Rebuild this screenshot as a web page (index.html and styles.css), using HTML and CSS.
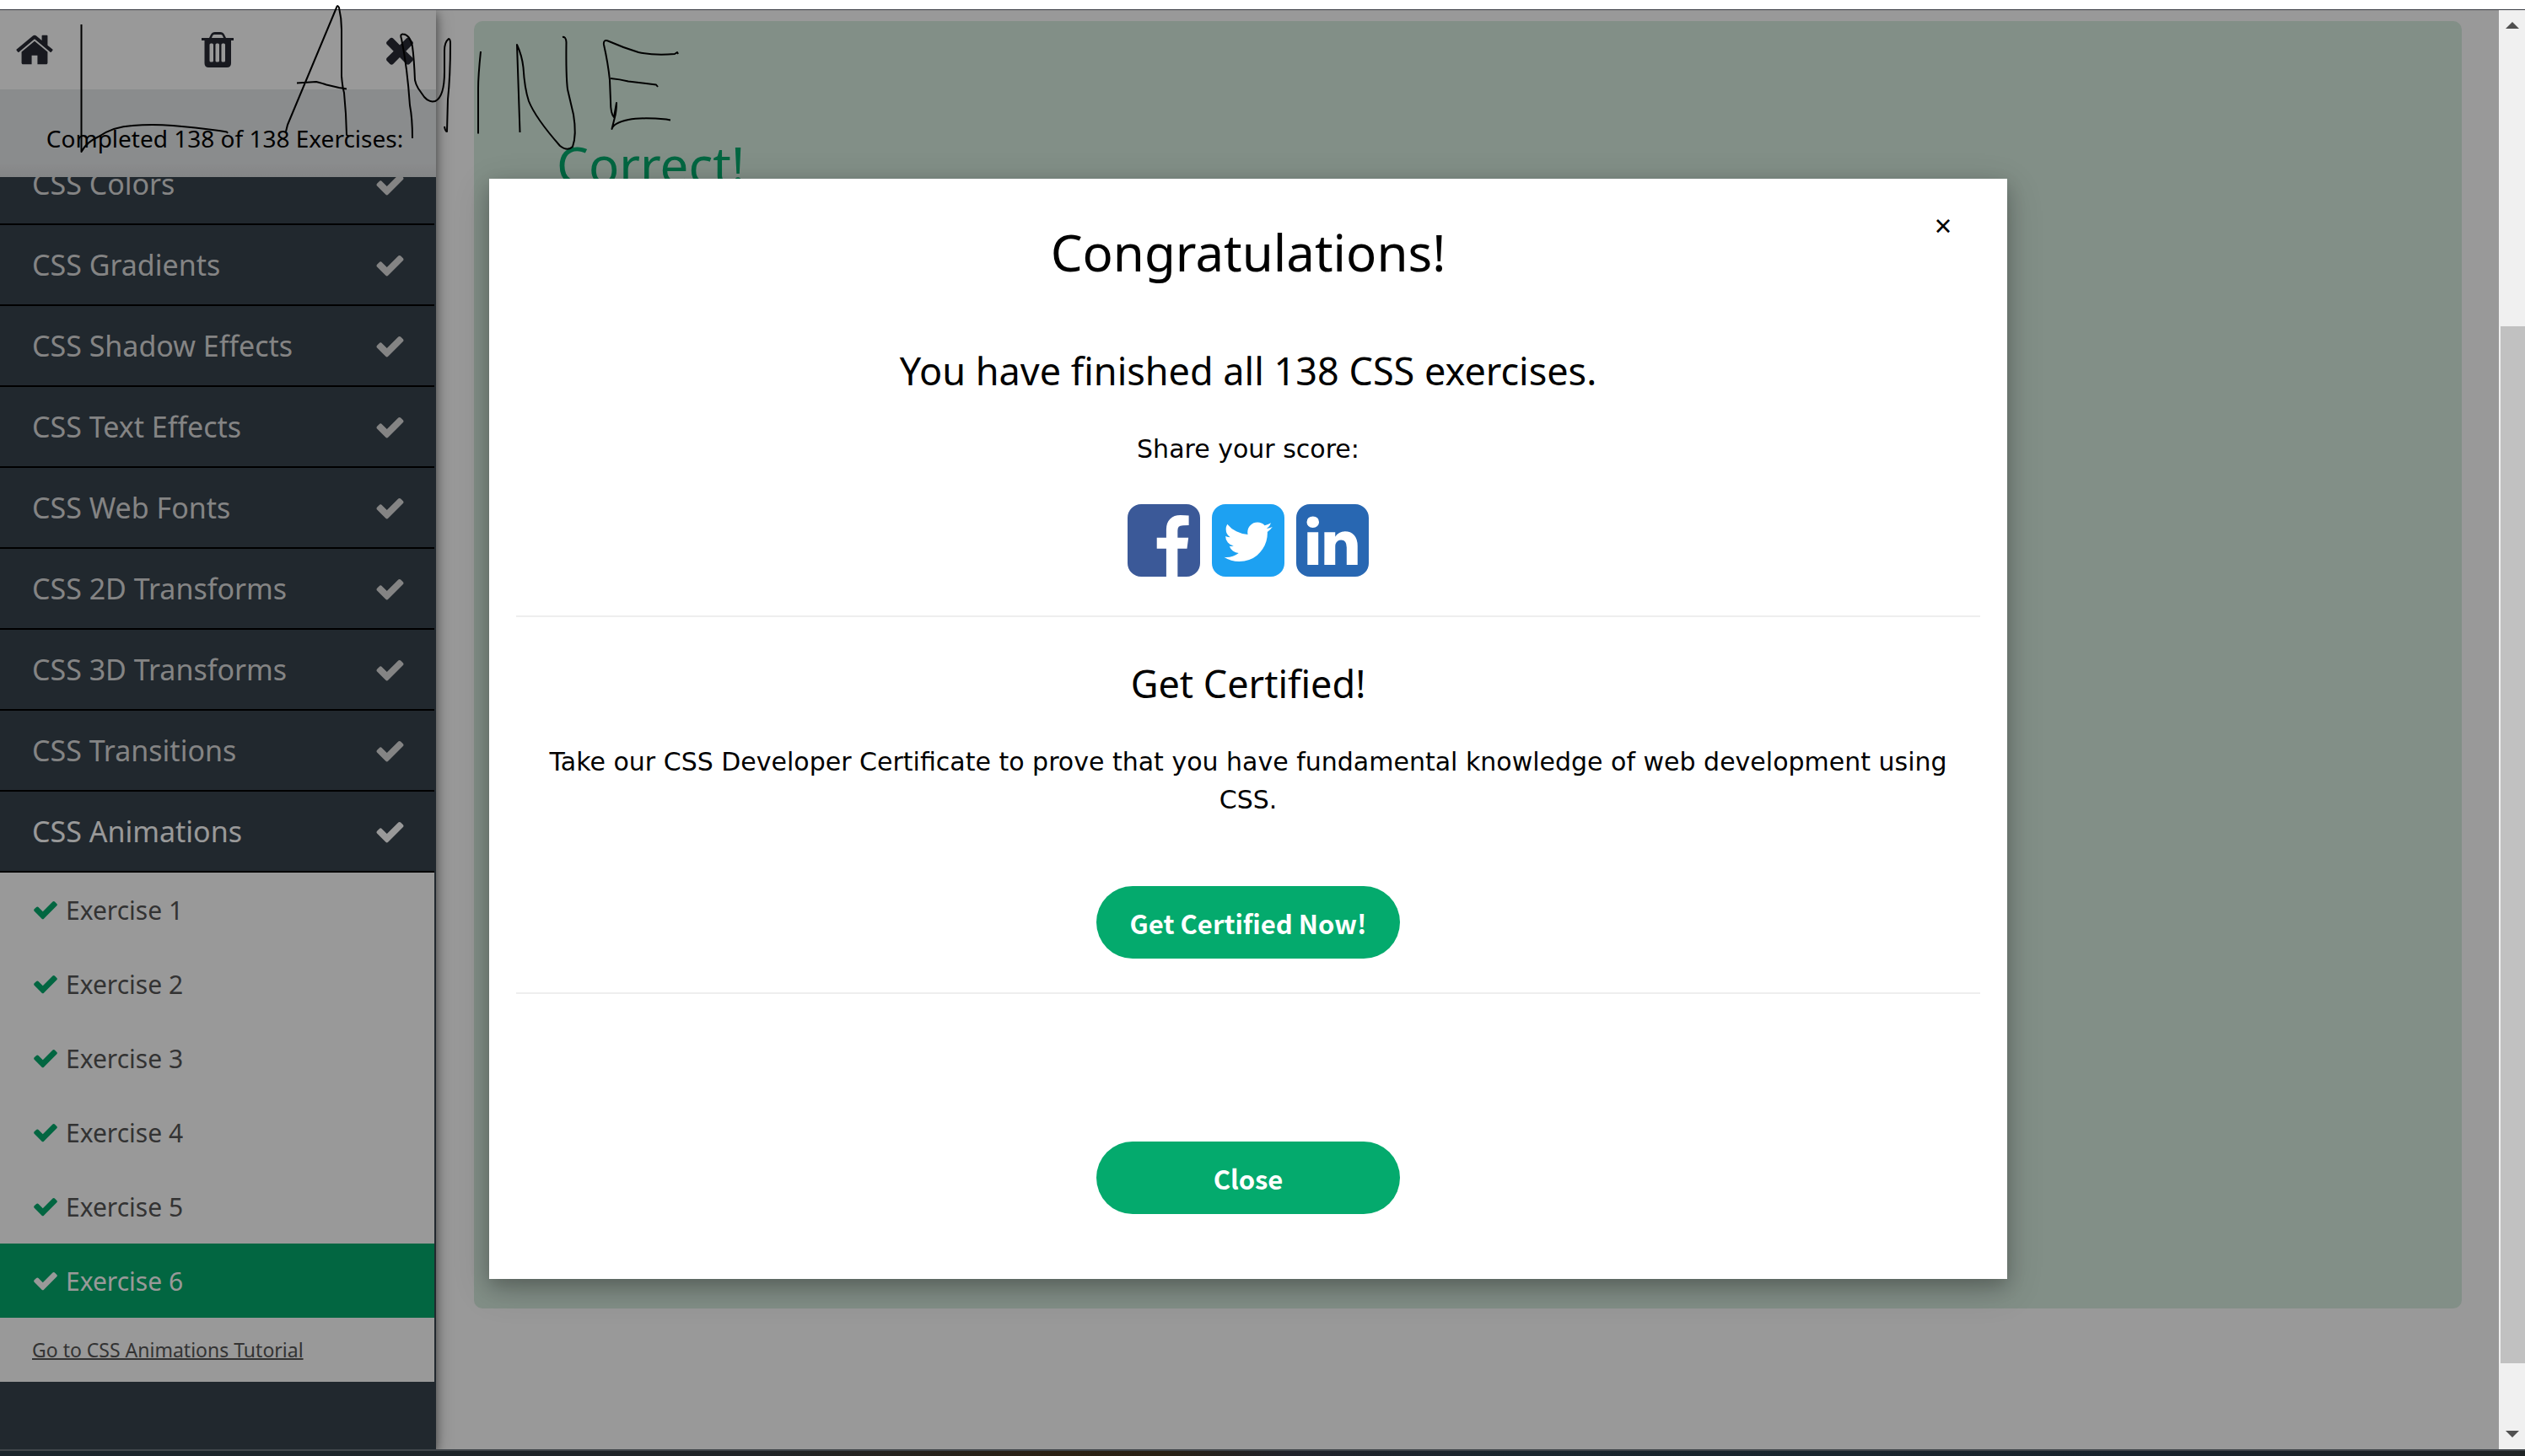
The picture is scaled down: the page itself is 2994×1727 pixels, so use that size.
FILE: index.html
```html
<!DOCTYPE html>
<html lang="en">
<head>
<meta charset="utf-8">
<title>CSS Exercises</title>
<link rel="stylesheet" href="styles.css">
</head>
<body>
<svg class="defs" aria-hidden="true">
  <symbol id="check" viewBox="0 0 1792 1792"><path d="M1671 566q0 40-28 68l-724 724-136 136q-28 28-68 28t-68-28l-136-136-362-362q-28-28-28-68t28-68l136-136q28-28 68-28t68 28l294 295 656-657q28-28 68-28t68 28l136 136q28 28 28 68z"/></symbol>
</svg>
<div class="browser-edge"></div>
<div class="window">
  <div class="page">
    <nav class="sidebar">
      <div class="tools">
        <a class="tool" href="#" aria-label="Home"><svg class="icon-lg" viewBox="0 0 1792 1792"><path d="M1472 992v480q0 26-19 45t-45 19h-384v-384h-256v384h-384q-26 0-45-19t-19-45v-480q0-1 .5-3t.5-3l575-474 575 474q1 2 1 6zm223-69l-62 74q-8 9-21 11h-3q-13 0-21-7l-692-577-692 577q-12 8-24 7-13-2-21-11l-62-74q-8-10-7-23.5t11-21.5l719-599q32-26 76-26t76 26l244 204v-195q0-14 9-23t23-9h192q14 0 23 9t9 23v408l219 182q10 8 11 21.5t-7 23.5z"/></svg></a>
        <button class="tool" type="button" aria-label="Reset score"><svg class="icon-trash" viewBox="0 0 38 42"><path fill-rule="evenodd" d="M0 7h9l2-4q1.500-3 5-3h6q3.500 0 5 3l2 4h9v3h-3v27q0 5-5 5H8.500q-5 0-5-5V10H0zM12 7h14l-1-2.500q-.5-1.500-2-1.500h-8q-1.500 0-2 1.500zM11 13.500q-1.500 0-1.500 1.500v19q0 1.500 1.500 1.500h1.500q1.500 0 1.500-1.500V15q0-1.500-1.500-1.500zM18 13.500q-1.500 0-1.500 1.500v19q0 1.500 1.500 1.500h1.500q1.500 0 1.500-1.500V15q0-1.500-1.500-1.500zM25 13.500q-1.500 0-1.500 1.500v19q0 1.500 1.500 1.500h1.500q1.500 0 1.500-1.500V15q0-1.500-1.500-1.500z"/></svg></button>
        <button class="tool" type="button" aria-label="Close menu"><svg class="icon-lg" viewBox="0 0 1792 1792"><path d="M1490 1322q0 40-28 68l-136 136q-28 28-68 28t-68-28l-294-294-294 294q-28 28-68 28t-68-28l-136-136q-28-28-28-68t28-68l294-294-294-294q-28-28-28-68t28-68l136-136q28-28 68-28t68 28l294 294 294-294q28-28 68-28t68 28l136 136q28 28 28 68t-28 68l-294 294 294 294q28 28 28 68z"/></svg></button>
      </div>
      <p class="progress">Completed 138 of 138 Exercises:</p>
      <div class="menu">
        <ul class="topics">
          <li><a class="topic" href="#">CSS Colors<svg class="tick"><use href="#check"/></svg></a></li>
          <li><a class="topic" href="#">CSS Gradients<svg class="tick"><use href="#check"/></svg></a></li>
          <li><a class="topic" href="#">CSS Shadow Effects<svg class="tick"><use href="#check"/></svg></a></li>
          <li><a class="topic" href="#">CSS Text Effects<svg class="tick"><use href="#check"/></svg></a></li>
          <li><a class="topic" href="#">CSS Web Fonts<svg class="tick"><use href="#check"/></svg></a></li>
          <li><a class="topic" href="#">CSS 2D Transforms<svg class="tick"><use href="#check"/></svg></a></li>
          <li><a class="topic" href="#">CSS 3D Transforms<svg class="tick"><use href="#check"/></svg></a></li>
          <li><a class="topic" href="#">CSS Transitions<svg class="tick"><use href="#check"/></svg></a></li>
          <li><a class="topic open" href="#">CSS Animations<svg class="tick"><use href="#check"/></svg></a>
            <ul class="exercises">
              <li><a class="exercise" href="#"><svg class="done"><use href="#check"/></svg>Exercise 1</a></li>
              <li><a class="exercise" href="#"><svg class="done"><use href="#check"/></svg>Exercise 2</a></li>
              <li><a class="exercise" href="#"><svg class="done"><use href="#check"/></svg>Exercise 3</a></li>
              <li><a class="exercise" href="#"><svg class="done"><use href="#check"/></svg>Exercise 4</a></li>
              <li><a class="exercise" href="#"><svg class="done"><use href="#check"/></svg>Exercise 5</a></li>
              <li><a class="exercise current" href="#"><svg class="done"><use href="#check"/></svg>Exercise 6</a></li>
              <li class="tutorial"><a href="#">Go to CSS Animations Tutorial</a></li>
            </ul>
          </li>
        </ul>
      </div>
    </nav>
    <main class="content">
      <section class="result"><h1 class="title">Correct!</h1></section>
    </main>
    <div class="overlay">
      <div class="modal" role="dialog" aria-labelledby="congrats">
        <button class="dismiss" type="button" aria-label="Dismiss">×</button>
        <h1 class="title" id="congrats">Congratulations!</h1>
        <h2 class="subtitle">You have finished all 138 CSS exercises.</h2>
        <p class="text">Share your score:</p>
        <div class="share">
          <a href="#" aria-label="Facebook"><svg class="social facebook" viewBox="128 128 1536 1536"><path d="M1376 128q119 0 203.5 84.500t84.500 203.500v960q0 119-84.500 203.500t-203.500 84.500h-188v-595h199l30-232h-229v-148q0-56 23.500-84t91.500-28l122-1v-207q-63-9-178-9-136 0-217.500 80t-81.500 226v171h-200v232h200v595h-532q-119 0-203.500-84.500t-84.500-203.500v-960q0-119 84.500-203.500t203.500-84.500h960z"/></svg></a>
          <a href="#" aria-label="Twitter"><svg class="social twitter" viewBox="128 128 1536 1536"><path d="M1408 610q-56 25-121 34 68-40 93-117-65 38-134 51-61-66-153-66-87 0-148.500 61.500t-61.500 148.500q0 29 5 48-129-7-242-65t-192-155q-29 50-29 106 0 114 91 175-47-1-100-26v1q0 75 50 133.500t123 72.500q-29 8-51 8-13 0-39-4 21 63 74.500 104t121.500 42q-116 90-261 90-26 0-50-3 148 94 322 94 112 0 210-35.500t168-95 120.500-137 75-162 24.500-168.500q0-18-1-27 63-45 105-109zm256-194v960q0 119-84.500 203.500t-203.500 84.500h-960q-119 0-203.500-84.500t-84.500-203.500v-960q0-119 84.500-203.500t203.500-84.500h960q119 0 203.500 84.500t84.500 203.500z"/></svg></a>
          <a href="#" aria-label="LinkedIn"><svg class="social linkedin" viewBox="128 128 1536 1536"><path d="M365 1414h231v-694h-231v694zm246-908q-1-52-36-86t-93-34-94.500 34-36.500 86q0 51 35.500 85.500t92.500 34.500h1q59 0 95-34.500t36-85.500zm585 908h231v-398q0-154-73-233t-193-79q-136 0-209 117h2v-101h-231q3 66 0 694h231v-388q0-38 7-56 15-35 45-59.500t74-24.500q116 0 116 157v371zm468-998v960q0 119-84.500 203.500t-203.500 84.500h-960q-119 0-203.500-84.500t-84.500-203.500v-960q0-119 84.500-203.500t203.500-84.500h960q119 0 203.500 84.500t84.500 203.500z"/></svg></a>
        </div>
        <hr class="rule">
        <h2 class="subtitle">Get Certified!</h2>
        <p class="text">Take our CSS Developer Certificate to prove that you have fundamental knowledge of web development using CSS.</p>
        <button class="pill certify" type="button">Get Certified Now!</button>
        <hr class="rule">
        <button class="pill close" type="button">Close</button>
      </div>
    </div>
  </div>
  <div class="scrollbar">
    <svg class="arrow" viewBox="0 0 16 8"><path d="M8 0l8 8H0z"/></svg>
    <div class="track"><div class="thumb"></div></div>
    <svg class="arrow" viewBox="0 0 16 8"><path d="M0 0h16L8 8z"/></svg>
  </div>
</div>
<div class="taskbar"></div>
<svg class="ink" viewBox="0 0 900 220" aria-hidden="true">
  <path d="M96.500 29V180Q103 168 117 162Q135 150 157 149Q180 147 205 149Q240 152 269 156.500L270 158"/>
  <path d="M339 156L341 148L399 9Q400 5 402 9Q405 22 405 35V90Q406 103 408 110L410 135L411 160L414 162M352 98.500L375 97Q383 99 387 100.500L402 104L411 105.500"/>
  <path d="M489 164Q489 140 486 125Q483 80 476 46Q474 40 478 40.500Q486 41 489 55Q491 70 492 95Q493 100 496 105L503 115Q509 122 516 120Q527 115 527 85V60Q527 50 532 46Q534 46 534 52Q534 90 531 118L530 156Q528 156 527 150"/>
  <path d="M570 61Q567 90 567 105V158.500"/>
  <path d="M616.500 157L613 53Q619 66 620.500 80Q622 105 627 120Q635 140 664 173Q673 180 679 174Q684 160 680 136L673 106Q671 90 671.500 50Q671 43 667 44"/>
  <path d="M804 64L803 62L800 64Q775 66 757 62Q740 57 722 49Q715 46 716 53Q721 75 723 95L724 120Q724 135 728 139L731 122Q731 132 729 139L725.500 153Q727 146 745 142Q760 139 790 141.500L795 142.500M724 93Q735 94 745 96.500L778 100.500L780 103"/>
</svg>
</body>
</html>
```
FILE: styles.css
```css
* { box-sizing: border-box; }
body {
  margin: 0;
  height: 100vh;
  display: flex;
  flex-direction: column;
  position: relative;
  overflow: hidden;
  font-family: "Noto Sans", "Segoe UI", sans-serif;
  color: #000;
  background: #fff;
}
h1, h2, p, ul { margin: 0; padding: 0; font-weight: 400; }
ul { list-style: none; }
a { color: inherit; text-decoration: none; }
button { border: 0; padding: 0; background: none; color: inherit; font-family: inherit; cursor: pointer; }
svg { display: block; fill: currentColor; }
.defs { display: none; }

.browser-edge { flex: none; height: 12px; border-bottom: 1px solid #373a42; }
.window { flex: 1; min-height: 0; display: flex; }
.page { flex: 1; min-width: 0; display: flex; position: relative; overflow: hidden; }
.taskbar {
  flex: none;
  height: 8px;
  border-top: 2px solid #40454a;
  background: linear-gradient(90deg, #1a242b, #202427 30%, #2b2013 42%, #2a2114 46%, #20222a 51%, #1a262e 60%, #18232c 85%, #1e2324);
}

.sidebar {
  width: 517px;
  flex: none;
  display: flex;
  flex-direction: column;
  background: #38434d;
  box-shadow: 0 4px 10px rgba(0, 0, 0, .4), 0 4px 20px rgba(0, 0, 0, .3);
  z-index: 1;
}
.tools {
  flex: none;
  height: 94px;
  display: flex;
  align-items: center;
  justify-content: space-between;
  padding: 0 19px 0 17px;
  background: #fff;
  color: #282a35;
}
.icon-lg { width: 48px; height: 48px; }
.icon-trash { width: 38px; height: 42px; }
.progress {
  flex: none;
  height: 104px;
  padding: 38px 0 0 16px;
  font-size: 28px;
  line-height: 40px;
  text-align: center;
  background: linear-gradient(#e7e9eb 84%, #dcdee0);
}
.menu { flex: 1; min-height: 0; overflow: hidden; padding-right: 2px; }
.topics { margin-top: -39px; }
.topic {
  display: flex;
  align-items: center;
  justify-content: space-between;
  height: 96px;
  padding: 0 34px 0 38px;
  border-bottom: 2px solid #000;
  font-size: 34px;
  color: #ddd;
}
.topic.open { color: #fff; }
.tick { width: 37px; height: 37px; }
.exercises { background: #fff; }
.exercise {
  display: flex;
  align-items: center;
  gap: 8px;
  height: 88px;
  padding-left: 38px;
  font-size: 30px;
  color: #555;
}
.done { width: 32px; height: 32px; color: #04aa6d; }
.current { background: #04aa6d; color: #fff; }
.current .done { color: inherit; }
.tutorial { padding-left: 38px; font-size: 23px; line-height: 76px; color: #555; }
.tutorial a { text-decoration: underline; text-decoration-thickness: 2px; }

.content { flex: 1; display: flex; padding: 13px 44px 167px 45px; background: #fff; }
.result {
  flex: 1;
  padding: 125px 98px 0;
  border-radius: 10px;
  background: #d9eee1;
  color: #04aa6d;
}
.title { font-size: 60px; line-height: 90px; }

.overlay {
  position: absolute;
  inset: 0;
  z-index: 2;
  display: flex;
  align-items: flex-start;
  justify-content: center;
  padding: 200px 3px 0 0;
  background: rgba(0, 0, 0, .4);
}
.modal {
  position: relative;
  width: 1800px;
  max-width: 92%;
  padding: 42px 32px 77px;
  background: #fff;
  text-align: center;
  box-shadow: 0 8px 20px rgba(0, 0, 0, .2), 0 12px 40px rgba(0, 0, 0, .19);
}
.dismiss {
  position: absolute;
  top: 32px;
  right: 60px;
  width: 32px;
  font-size: 36px;
  line-height: 48px;
}
.subtitle { margin: 62px 0 36px; font-size: 45px; line-height: 68px; }
.text { padding: 0 32px; font: 30px/45px "DejaVu Sans", Verdana, sans-serif; }
.share { display: flex; justify-content: center; gap: 14px; margin-top: 43px; }
.social { width: 86px; height: 86px; }
.facebook { color: #3b5998; }
.twitter { color: #1da1f2; }
.linkedin { color: #2867b2; }
.rule { height: 2px; margin: 46px 0 0; border: 0; background: #eee; }
.rule + .subtitle { margin-top: 45px; }
.pill {
  display: block;
  width: 360px;
  height: 86px;
  margin: 80px auto 0;
  border-radius: 43px;
  background: #04aa6d;
  color: #fff;
  font: 700 31px "Noto Sans CJK SC", sans-serif;
}
.certify + .rule { margin-top: 40px; }
.close { margin-top: 175px; }

.scrollbar {
  flex: none;
  width: 31px;
  display: flex;
  flex-direction: column;
  align-items: center;
  padding: 14px 0;
  background: #f0f0f0;
  color: #505050;
}
.arrow { width: 16px; height: 8px; }
.track { flex: 1; width: 100%; padding: 353px 0 80px 2px; }
.thumb { height: 100%; background: #c1c1c1; }

.ink {
  position: absolute;
  top: 0;
  left: 0;
  width: 900px;
  height: 220px;
  z-index: 3;
  fill: none;
  stroke: #000;
  stroke-width: 2;
  stroke-linejoin: round;
  pointer-events: none;
}
```
